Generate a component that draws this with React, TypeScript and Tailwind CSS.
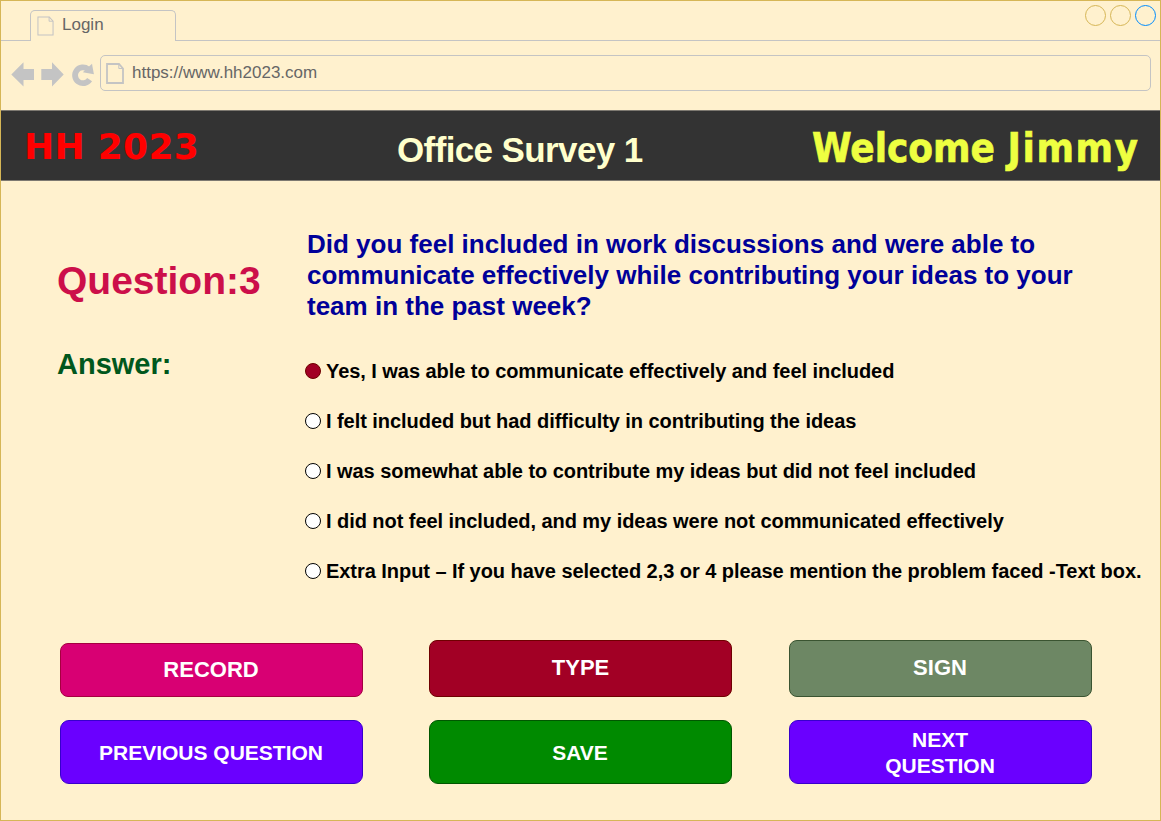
import React from "react";

const options = [
  "Yes, I was able to communicate effectively and feel included",
  "I felt included but had difficulty in contributing the ideas",
  "I was somewhat able to contribute my ideas but did not feel included",
  "I did not feel included, and my ideas were not communicated effectively",
  "Extra Input – If you have selected 2,3 or 4 please mention the problem faced -Text box.",
];

function PageIcon({ className, stroke }: { className: string; stroke: number }) {
  return (
    <svg viewBox="0 0 18 21" preserveAspectRatio="none" className={className} fill="none" stroke="#c4c4c4" strokeWidth={stroke}>
      <path d="M1 1H13L17 5.5V20H1Z" />
      <path d="M12.8 1V5.5H17" strokeWidth="1" />
    </svg>
  );
}

function TabBar() {
  return (
    <div className="flex h-10">
      <div className="w-[29px] border-b border-[#c4c4c4]" />
      <div className="mt-[9px] flex w-[146px] rounded-t-[5px] border border-b-0 border-[#c4c4c4]">
        <PageIcon className="mt-[5px] ml-[6px] h-[20px] w-[17px]" stroke={1.1} />
        <span className="ml-[8px] mt-[4px] text-[17px] leading-5 text-[#666666]">Login</span>
      </div>
      <div className="flex flex-1 justify-end gap-1 border-b border-[#c4c4c4] pt-1 pr-[4px]">
        <span className="size-[21px] rounded-full border border-[#d6b656]" />
        <span className="size-[21px] rounded-full border border-[#d6b656]" />
        <span className="size-[21px] rounded-full border border-[#008cff]" />
      </div>
    </div>
  );
}

function AddressBar() {
  return (
    <div className="flex h-[69px] pt-[14px] pr-[9px]">
      <svg viewBox="0 0 99 36" className="h-9 w-[99px] shrink-0" fill="#c4c4c4">
        <path d="M10.3 19.5L22.5 7.3V14H33V25H22.5V31.5Z" />
        <path d="M62.7 19.5L51 7.3V14H40.3V25H51V31.5Z" />
        <path d="M87 14.2A7.9 7.9 0 1 0 88.6 24.6" fill="none" stroke="#c4c4c4" strokeWidth="5.8" />
        <path d="M91 8.7L92.9 19.2L81.8 17.2Z" />
      </svg>
      <div className="flex h-9 flex-1 rounded-[5px] border border-[#c4c4c4]">
        <PageIcon className="mt-[7px] ml-[5px] h-[21px] w-[18px]" stroke={1.8} />
        <span className="ml-[8px] mt-[7px] text-[17px] leading-5 text-[#666666]">https://www.hh2023.com</span>
      </div>
    </div>
  );
}

export default function App() {
  return (
    <div className="h-[821px] w-[1161px] overflow-hidden border border-[#d6b656] bg-[#fff1ce] font-['Liberation_Sans',Arial,sans-serif]">
      <TabBar />
      <AddressBar />
      <header className="flex h-[71px] border-y border-[#7d7971] bg-[#333333] font-bold whitespace-nowrap">
        <div className="w-[374px] shrink-0 pt-[15px] pl-[23px] font-['DejaVu_Sans',Verdana,sans-serif] text-[36px] leading-[42px] tracking-[0.3px] text-[#ff0000]">HH 2023</div>
        <h1 className="w-[434px] shrink-0 pt-[19px] pl-[22px] text-[35px] leading-[40px] tracking-[-0.62px] text-[#ffffcc]">Office Survey 1</h1>
        <div className="pt-[13px] pl-[3px] font-['DejaVu_Sans_Condensed','DejaVu_Sans',Tahoma,sans-serif] text-[40px] leading-[48px] text-[#eeff41] [-webkit-text-stroke:0.6px_#eeff41]">
          Welcome <span className="tracking-[1.6px]">Jimmy</span>
        </div>
      </header>
      <main className="font-bold whitespace-nowrap">
        <section className="flex h-[170px] pt-[48px]">
          <h2 className="w-[306px] shrink-0 pt-[29px] pl-[56px] text-[39px] leading-[45px] text-[#cc0f4a]">Question:3</h2>
          <p className="text-[26px] leading-[31px] text-[#000099]">
            Did you feel included in work discussions and were able to<br />
            communicate effectively while contributing your ideas to your<br />
            team in the past week?
          </p>
        </section>
        <section className="flex h-[289px]">
          <h3 className="w-[303px] shrink-0 pl-[56px] text-[29px] leading-[26px] text-[#00571c]">Answer:</h3>
          <ul className="flex flex-col gap-[26px] pt-[8px]">
            {options.map((text, i) => (
              <li key={text} className="flex h-6 items-center gap-[5px] text-[20px] leading-6 tracking-[-0.05px] text-black">
                <span className={i === 0 ? "ml-px size-4 shrink-0 rounded-full border border-[#6f0000] bg-[#a20025]" : "ml-px size-4 shrink-0 rounded-full border border-black bg-white"} />
                <span>{text}</span>
              </li>
            ))}
          </ul>
        </section>
        <section className="flex pl-[59px] text-white">
          <div className="w-[369px]">
            <button className="mt-[3px] flex h-[54px] w-[303px] items-center justify-center rounded-[8px] border border-[#a50040] bg-[#d80073] pr-px pb-px text-[22px] leading-[26px]">RECORD</button>
            <button className="mt-[23px] flex h-[64px] w-[303px] items-center justify-center rounded-[9px] border border-[#3700cc] bg-[#6a00ff] pt-[2px] pr-px text-[21px] leading-[26px]">PREVIOUS QUESTION</button>
          </div>
          <div className="w-[360px]">
            <button className="flex h-[57px] w-[303px] items-center justify-center rounded-[8px] border border-[#6f0000] bg-[#a20025] pb-[2px] text-[22px] leading-[26px]">TYPE</button>
            <button className="mt-[23px] flex h-[64px] w-[303px] items-center justify-center rounded-[9px] border border-[#005700] bg-[#008a00] pt-[2px] pr-px text-[21px] leading-[26px]">SAVE</button>
          </div>
          <div>
            <button className="flex h-[57px] w-[303px] items-center justify-center rounded-[8px] border border-[#3a5431] bg-[#6d8764] pr-px pb-[2px] text-[22px] leading-[26px]">SIGN</button>
            <button className="mt-[23px] flex h-[64px] w-[303px] items-center justify-center rounded-[9px] border border-[#3700cc] bg-[#6a00ff] pt-[2px] pr-px text-[21px] leading-[26px]">
              <span>NEXT<br />QUESTION</span>
            </button>
          </div>
        </section>
      </main>
    </div>
  );
}
